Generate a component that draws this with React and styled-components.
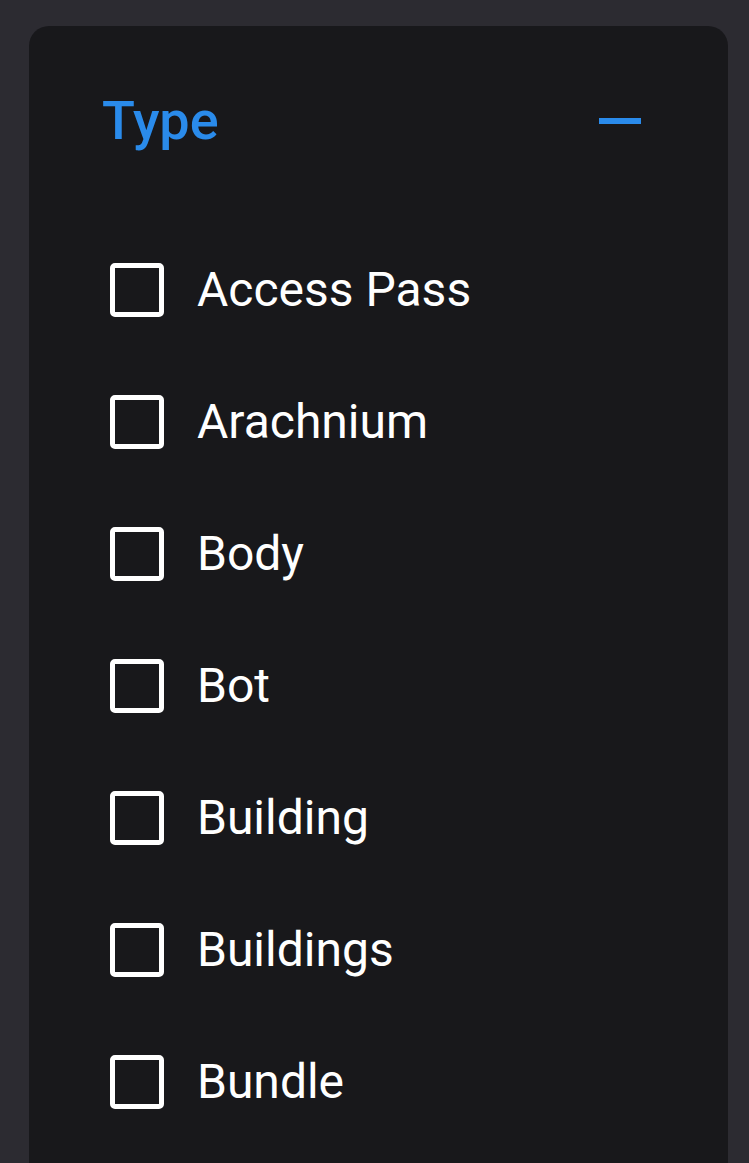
import React, { useState } from "react";
import styled, { createGlobalStyle } from "styled-components";

const GlobalStyle = createGlobalStyle`
  html, body {
    margin: 0;
    padding: 0;
    background: #2c2b31;
    font-family: Roboto, "Noto Sans", "Liberation Sans", sans-serif;
  }
`;

const types = [
  "Access Pass",
  "Arachnium",
  "Body",
  "Bot",
  "Building",
  "Buildings",
  "Bundle",
];

const App = () => {
  const [open, setOpen] = useState(true);
  const [checked, setChecked] = useState({});

  const toggle = (name) =>
    setChecked((prev) => ({ ...prev, [name]: !prev[name] }));

  return (
    <>
      <GlobalStyle />
      <Page>
        <Panel>
          <Header>
            <Title>Type</Title>
            <Collapse
              aria-label="collapse"
              onClick={() => setOpen(!open)}
            />
          </Header>
          {open && (
            <List>
              {types.map((name) => (
                <Option key={name}>
                  <Box
                    type="checkbox"
                    checked={!!checked[name]}
                    onChange={() => toggle(name)}
                  />
                  <span>{name}</span>
                </Option>
              ))}
            </List>
          )}
        </Panel>
      </Page>
    </>
  );
};

const Page = styled.div`
  padding: 26px 21px 0 29px;
`;

const Panel = styled.section`
  background: #18181b;
  border-radius: 20px 20px 0 0;
  padding: 68px 87px 80px 73px;
`;

const Header = styled.div`
  display: flex;
  align-items: center;
  justify-content: space-between;
  height: 54px;
`;

const Title = styled.h3`
  margin: 0;
  font-size: 54px;
  line-height: 1;
  font-weight: 500;
  color: #2a8beb;
`;

const Collapse = styled.button`
  width: 42px;
  height: 6px;
  padding: 0;
  border: none;
  background: #2a8beb;
  cursor: pointer;
`;

const List = styled.div`
  display: flex;
  flex-direction: column;
  gap: 78px;
  margin-top: 115px;
  padding-left: 8px;
`;

const Option = styled.label`
  display: flex;
  align-items: center;
  gap: 33px;
  height: 54px;
  font-size: 48px;
  line-height: 1;
  color: #ffffff;
  cursor: pointer;
`;

const Box = styled.input`
  appearance: none;
  margin: 0;
  width: 54px;
  height: 54px;
  box-sizing: border-box;
  border: 5px solid #ffffff;
  border-radius: 5px;
  background: transparent;
  flex-shrink: 0;
  cursor: pointer;
  &:checked {
    background: #2a8beb;
    border-color: #2a8beb;
  }
`;

export default App;
